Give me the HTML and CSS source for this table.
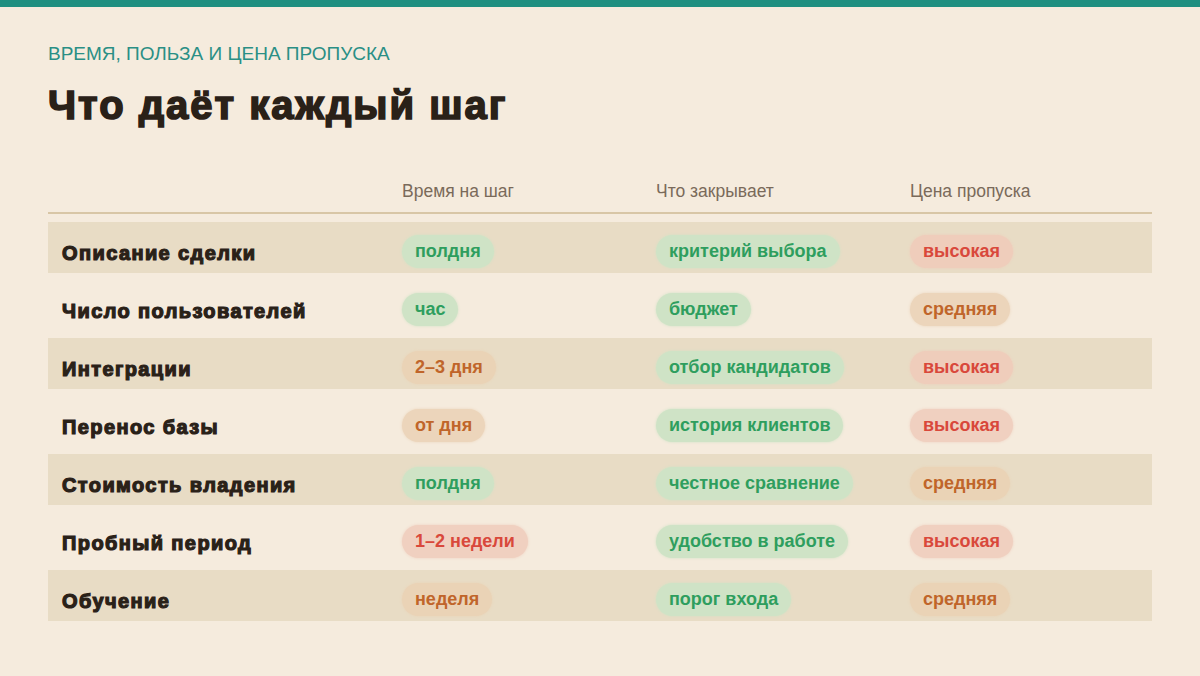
FILE: index.html
```html
<!DOCTYPE html>
<html lang="ru">
<head>
<meta charset="utf-8">
<title>Что даёт каждый шаг</title>
<link rel="stylesheet" href="styles.css">
</head>
<body>
<div class="topbar"></div>
<main class="page">
  <div class="eyebrow">ВРЕМЯ, ПОЛЬЗА И ЦЕНА ПРОПУСКА</div>
  <h1 class="title">Что даёт каждый шаг</h1>
  <div class="table">
    <div class="row head">
      <div class="cell"></div>
      <div class="cell">Время на шаг</div>
      <div class="cell">Что закрывает</div>
      <div class="cell">Цена пропуска</div>
    </div>
    <div class="row band">
      <div class="cell label">Описание сделки</div>
      <div class="cell"><span class="pill green">полдня</span></div>
      <div class="cell"><span class="pill green">критерий выбора</span></div>
      <div class="cell"><span class="pill red">высокая</span></div>
    </div>
    <div class="row">
      <div class="cell label">Число пользователей</div>
      <div class="cell"><span class="pill green">час</span></div>
      <div class="cell"><span class="pill green">бюджет</span></div>
      <div class="cell"><span class="pill orange">средняя</span></div>
    </div>
    <div class="row band">
      <div class="cell label">Интеграции</div>
      <div class="cell"><span class="pill orange">2–3 дня</span></div>
      <div class="cell"><span class="pill green">отбор кандидатов</span></div>
      <div class="cell"><span class="pill red">высокая</span></div>
    </div>
    <div class="row">
      <div class="cell label">Перенос базы</div>
      <div class="cell"><span class="pill orange">от дня</span></div>
      <div class="cell"><span class="pill green">история клиентов</span></div>
      <div class="cell"><span class="pill red">высокая</span></div>
    </div>
    <div class="row band">
      <div class="cell label">Стоимость владения</div>
      <div class="cell"><span class="pill green">полдня</span></div>
      <div class="cell"><span class="pill green">честное сравнение</span></div>
      <div class="cell"><span class="pill orange">средняя</span></div>
    </div>
    <div class="row">
      <div class="cell label">Пробный период</div>
      <div class="cell"><span class="pill red">1–2 недели</span></div>
      <div class="cell"><span class="pill green">удобство в работе</span></div>
      <div class="cell"><span class="pill red">высокая</span></div>
    </div>
    <div class="row band">
      <div class="cell label">Обучение</div>
      <div class="cell"><span class="pill orange">неделя</span></div>
      <div class="cell"><span class="pill green">порог входа</span></div>
      <div class="cell"><span class="pill orange">средняя</span></div>
    </div>
  </div>
</main>
</body>
</html>
```
FILE: styles.css
```css
* { box-sizing: border-box; }
html, body {
  margin: 0;
  padding: 0;
}
body {
  background: #f5ebdd;
  font-family: "Liberation Sans", Arial, sans-serif;
  color: #2a2118;
  width: 1200px;
  height: 676px;
  overflow: hidden;
}
.topbar {
  height: 7px;
  background: #1f8f80;
}
.page {
  padding: 36px 48px 0;
}
.eyebrow {
  font-size: 19px;
  line-height: 22px;
  color: #2a8f85;
}
.title {
  margin: 16px 0 0;
  font-size: 40px;
  line-height: 48px;
  font-weight: 700;
  color: #2a2118;
  letter-spacing: 2px;
  -webkit-text-stroke: 1.6px #2a2118;
}
.table {
  margin-top: 51px;
  display: flex;
  flex-direction: column;
  gap: 7px;
}
.row {
  display: grid;
  grid-template-columns: 340px 254px 254px 1fr;
  align-items: center;
  height: 51px;
  padding-top: 7px;
}
.row.head {
  height: auto;
  padding-top: 0;
  padding-bottom: 10px;
  border-bottom: 2px solid #d8c6a6;
  margin-bottom: 1px;
  font-size: 17.5px;
  line-height: 22px;
  color: #7a6a5a;
}
.row.band {
  background: #e8dcc5;
}
.cell {
  padding: 0 14px;
}
.cell.label {
  font-size: 20px;
  font-weight: 700;
  letter-spacing: 1.4px;
  -webkit-text-stroke: 1.2px #2a2118;
  padding-top: 5px;
}
.pill {
  display: inline-block;
  height: 33px;
  line-height: 33px;
  padding: 0 13px;
  border-radius: 17px;
  font-size: 18px;
  font-weight: 700;
}
.pill.green {
  color: #2e9e5e;
  background: #cfe3c6;
  box-shadow: 0 0 3px #cfe3c6;
}
.pill.orange {
  color: #c0652a;
  background: #ecd5bb;
  box-shadow: 0 0 3px #ecd5bb;
}
.pill.red {
  color: #d9483b;
  background: #f0d0c0;
  box-shadow: 0 0 3px #f0d0c0;
}
.band .pill.orange { background: #ead3b6; box-shadow: 0 0 3px #ead3b6; }
.band .pill.red { background: #efcdbb; box-shadow: 0 0 3px #efcdbb; }
```
